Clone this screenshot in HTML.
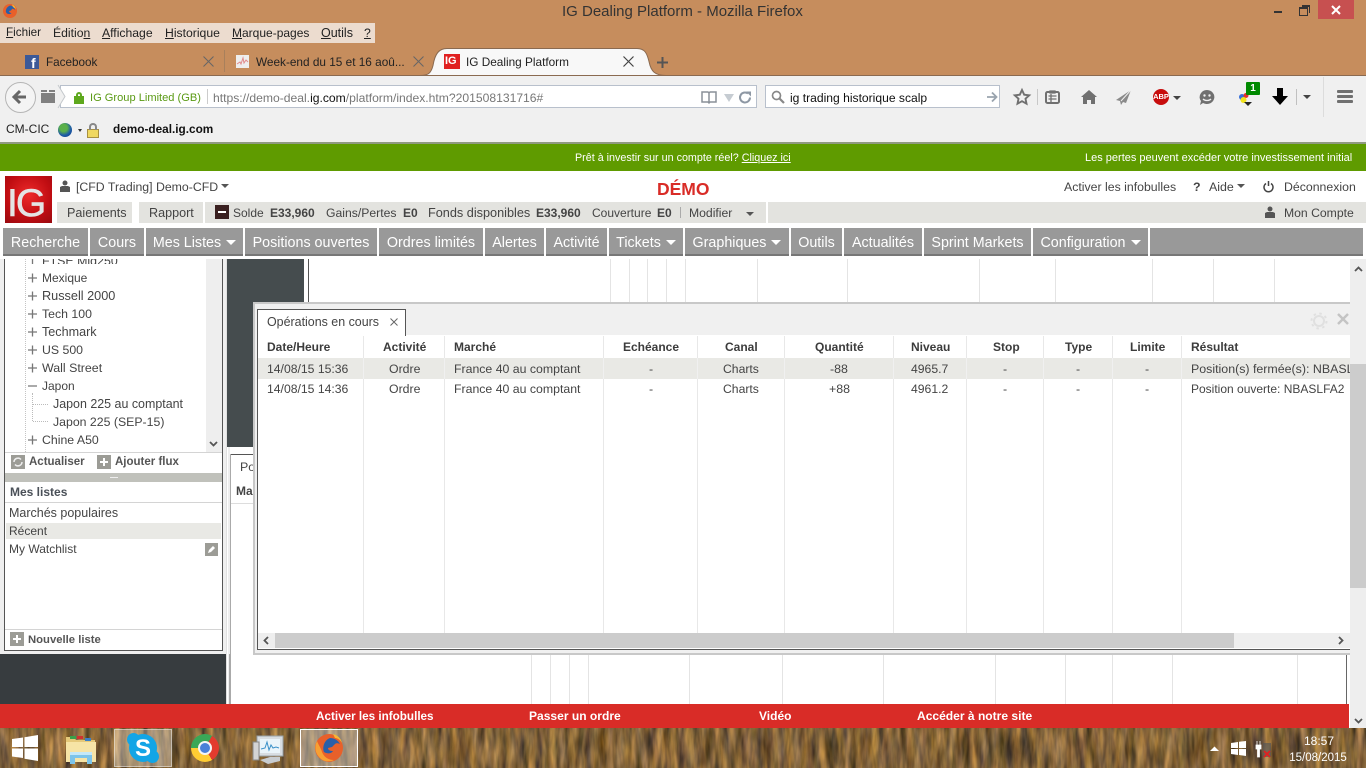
<!DOCTYPE html>
<html lang="fr">
<head>
<meta charset="utf-8">
<title>IG Dealing Platform - Mozilla Firefox</title>
<style>
html,body{margin:0;padding:0;width:1366px;height:768px;overflow:hidden;background:#fff;font-family:"Liberation Sans",Arial,sans-serif;font-size:12.4px;color:#444}
.b{position:absolute;display:block}
.t{position:absolute;white-space:nowrap;line-height:14px;display:block}
.c{text-align:center}
.h{font-weight:bold;color:#3c3c3c;font-size:12px}
.m{color:#222;font-size:12.2px}
.m u{text-decoration:underline}
.n{position:absolute;top:228px;height:26px;background:#999;border-bottom:2px solid #777;color:#fff;font-size:14.3px;line-height:31px;text-align:center;white-space:nowrap}
.n i{display:inline-block;width:0;height:0;border-left:5px solid transparent;border-right:5px solid transparent;border-top:5px solid #fff;margin-left:5px;vertical-align:2px}
.v{position:absolute;width:1px;background:#e8e8e8}
.g{position:absolute;width:1px;background:#e4e4e4}
svg{position:absolute;display:block;overflow:visible}
.arrow{position:absolute;width:0;height:0;border-left:4px solid transparent;border-right:4px solid transparent;border-top:4px solid #555}
</style>
</head>
<body>

<!-- title bar -->
<div class="b" style="left:0;top:0;width:1366px;height:75px;background:#c68d5d"></div>
<div class="b" style="left:0;top:75px;width:1366px;height:1px;background:#8a6a50"></div>
<svg style="left:2px;top:3px" width="16" height="16" viewBox="0 0 16 16"><circle cx="8" cy="8" r="7" fill="#e8602a"/><path d="M8 2.500a5.500 5.500 0 0 1 5 4.500c-1-1-2-1.500-3-1l-1 1.500-2 .5c0 1 1 2 2.500 2-1 1.500-3.500 1.500-5 0C3 8.500 4 4 8 2.500z" fill="#2a5fa8"/><path d="M10 1.500c2 .8 3.500 2.500 4 4.500l-3-2z" fill="#f7b733"/></svg>
<span class="t" style="left:562px;top:4px;font-size:15px;color:#333;line-height:16px">IG Dealing Platform - Mozilla Firefox</span>
<!-- window buttons -->
<div class="b" style="left:1274px;top:11px;width:8px;height:2px;background:#333"></div>
<div class="b" style="left:1299px;top:7px;width:7px;height:6px;border:1px solid #333;border-top-width:2px"></div>
<div class="b" style="left:1302px;top:5px;width:7px;height:6px;border:1px solid #333;border-top-width:2px;border-left:0;border-bottom:0"></div>
<div class="b" style="left:1318px;top:0;width:36px;height:19px;background:#c75050"></div>
<svg style="left:1331px;top:5px" width="10" height="10"><path d="M1 1l8 8M9 1l-8 8" stroke="#fff" stroke-width="2"/></svg>

<!-- menu -->
<div class="b" style="left:0;top:23px;width:375px;height:20px;background:#ecdccf"></div>
<span class="t m" style="left:6px;top:26px;font-size:11.700px"><u>F</u>ichier</span>
<span class="t m" style="left:53px;top:26px"><span>Éditio</span><u>n</u></span>
<span class="t m" style="left:102px;top:26px"><u>A</u>ffichage</span>
<span class="t m" style="left:165px;top:26px"><u>H</u>istorique</span>
<span class="t m" style="left:232px;top:26px;font-size:12px"><u>M</u>arque-pages</span>
<span class="t m" style="left:321px;top:26px;font-size:12.500px"><u>O</u>utils</span>
<span class="t m" style="left:364px;top:26px"><u>?</u></span>

<!-- tabs -->
<div class="b" style="left:25px;top:55px;width:14px;height:14px;background:#3b5998"></div>
<span class="t" style="left:31px;top:56px;color:#fff;font-weight:bold;font-size:14px;line-height:14px">f</span>
<span class="t m" style="left:46px;top:56px;font-size:11.700px">Facebook</span>
<svg style="left:203px;top:56px" width="11" height="11"><path d="M.5.500l10 10M10.500.500l-10 10" stroke="#666" stroke-width="1"/></svg>
<div class="b" style="left:224px;top:50px;width:1px;height:22px;background:#a8805c"></div>
<div class="b" style="left:236px;top:55px;width:13px;height:13px;background:#eee"></div>
<svg style="left:236px;top:55px" width="13" height="13"><path d="M1 9l3-2 1 2 2-6 1 5 2-3 2 2" stroke="#e08a8a" fill="none"/></svg>
<span class="t m" style="left:256px;top:55px;font-size:11.800px">Week-end du 15 et 16 aoû...</span>
<svg style="left:413px;top:56px" width="11" height="11"><path d="M.5.500l10 10M10.500.500l-10 10" stroke="#666" stroke-width="1"/></svg>
<svg style="left:420px;top:47px" width="240" height="30"><path d="M0 28.500c8 0 11-2 13-10 2-12 6-17 14-17h190c8 0 10 5 12 13 2 10 6 14 17 14z" fill="#f8f8f8" stroke="#8a6a50" stroke-width="1"/><path d="M1 29h236v2H1z" fill="#f4f4f4"/></svg>
<div class="b" style="left:444px;top:54px;width:16px;height:15px;background:#e02020"></div>
<span class="t" style="left:445px;top:55px;color:#fff;font-weight:bold;font-size:11px;line-height:13px">IG</span>
<span class="t m" style="left:466px;top:55px;font-size:11.800px">IG Dealing Platform</span>
<svg style="left:623px;top:56px" width="11" height="11"><path d="M.5.500l10 10M10.500.500l-10 10" stroke="#444" stroke-width="1.200"/></svg>
<svg style="left:656px;top:56px" width="13" height="13"><path d="M6.500 1v11M1 6.500h11" stroke="#555" stroke-width="2"/></svg>

<!-- nav toolbar -->
<div class="b" style="left:0;top:76px;width:1366px;height:66px;background:#f0f0f0"></div>
<div class="b" style="left:60px;top:85px;width:697px;height:23px;background:#fff;border:1px solid #b8c0cc;box-sizing:border-box"></div>
<div class="b" style="left:765px;top:85px;width:235px;height:23px;background:#fff;border:1px solid #b8c0cc;box-sizing:border-box"></div>
<div class="b" style="left:5px;top:82px;width:29px;height:29px;border-radius:50%;background:#f4f4f4;border:1px solid #b5b5b5;box-sizing:content-box"></div>
<svg style="left:12px;top:89px" width="16" height="16"><path d="M8 2L2 8l6 6M2 8h12" fill="none" stroke="#666" stroke-width="3"/></svg>
<div class="b" style="left:41px;top:93px;width:14px;height:10px;background:#808080"></div>
<div class="b" style="left:41px;top:90px;width:6px;height:2px;background:#808080"></div>
<div class="b" style="left:49px;top:90px;width:6px;height:2px;background:#808080"></div>
<svg style="left:58px;top:85px" width="8" height="23"><path d="M0 0l7 11.500L0 23" fill="#f0f0f0" stroke="#c4c8cc"/></svg>
<div class="b" style="left:74px;top:96px;width:10px;height:8px;background:#5ea81e"></div>
<div class="b" style="left:76px;top:92px;width:6px;height:5px;border:2px solid #5ea81e;border-bottom:0;border-radius:3px 3px 0 0;box-sizing:border-box"></div>
<span class="t" style="left:90px;top:91px;color:#5a9a14;font-size:11.100px">IG Group Limited (GB)</span>
<div class="b" style="left:207px;top:89px;width:1px;height:15px;background:#ccc"></div>
<span class="t" style="left:213px;top:91px;color:#777;font-size:12.140px">https://demo-deal.<span style="color:#111">ig.com</span>/platform/index.htm?201508131716#</span>
<svg style="left:701px;top:91px" width="16" height="13"><path d="M1 1h6l1 1 1-1h6v10H9l-1 1-1-1H1zM8 2v9" fill="none" stroke="#8a9098" stroke-width="1.500"/></svg>
<svg style="left:724px;top:94px" width="10" height="8"><path d="M0 0h10L5 8z" fill="#c6ccd2"/></svg>
<svg style="left:739px;top:91px" width="13" height="13"><path d="M11 6.500a5 5 0 1 1-2-4" fill="none" stroke="#8e98a4" stroke-width="2"/><path d="M7 .5h5v5z" fill="#8e98a4"/></svg>
<svg style="left:771px;top:90px" width="14" height="14"><circle cx="5.500" cy="5.500" r="4" fill="none" stroke="#888" stroke-width="1.700"/><path d="M8.500 8.500l4.500 4.500" stroke="#888" stroke-width="2.200"/></svg>
<span class="t" style="left:790px;top:91px;color:#111;font-size:12.100px">ig trading historique scalp</span>
<svg style="left:986px;top:91px" width="12" height="12"><path d="M6 1.500L10.500 6 6 10.500M10 6H1" fill="none" stroke="#9aa4ae" stroke-width="1.800"/></svg>
<svg style="left:1013px;top:88px" width="18" height="18" viewBox="0 0 18 18"><path d="M9 2l2.200 4.700 5 .6-3.700 3.400 1 5L9 13.200l-4.500 2.500 1-5L1.800 7.300l5-.6z" fill="none" stroke="#707070" stroke-width="1.900"/></svg>
<div class="b" style="left:1037px;top:89px;width:1px;height:16px;background:#c8c8c8"></div>
<svg style="left:1045px;top:89px" width="16" height="16"><rect x="1" y="3" width="13" height="11" rx="1.500" fill="none" stroke="#707070" stroke-width="2"/><path d="M5 2h5v2H5zM3.500 7h8M3.500 10h8M6 5v8" stroke="#707070" stroke-width="1.300" fill="none"/></svg>
<svg style="left:1081px;top:90px" width="16" height="15"><path d="M8 0L0 7h2v7h4v-4h4v4h4V7h2z" fill="#707070"/></svg>
<svg style="left:1116px;top:90px" width="16" height="15"><path d="M15 0L0 10l4 1 1 4 2-3 3 1z" fill="#8a8a8a"/><path d="M15 0L5 11" stroke="#f0f0f0"/></svg>
<div class="b" style="left:1153px;top:89px;width:16px;height:16px;border-radius:50%;background:#c70d0d"></div>
<span class="t" style="left:1153px;top:90px;width:16px;text-align:center;color:#fff;font-weight:bold;font-size:7.500px">ABP</span>
<div class="arrow" style="left:1173px;top:96px;border-top-color:#444"></div>
<svg style="left:1199px;top:89px" width="16" height="17"><path d="M8 1a7.500 7 0 1 1-4 13l-3 2 1-4A7.500 7 0 0 1 8 1z" fill="#707070"/><circle cx="5.500" cy="6.500" r="1.200" fill="#f0f0f0"/><circle cx="10.500" cy="6.500" r="1.200" fill="#f0f0f0"/><path d="M4 10c2 2 6 2 8 0" stroke="#f0f0f0" fill="none" stroke-width="1.300"/></svg>
<svg style="left:1238px;top:92px" width="14" height="12"><circle cx="4" cy="5" r="3" fill="#3a6fd8"/><circle cx="8" cy="3.500" r="2.500" fill="#e53030"/><circle cx="5.500" cy="8" r="3" fill="#f2e21b"/></svg>
<div class="b" style="left:1246px;top:82px;width:14px;height:13px;background:#008a00;border-radius:1px"></div>
<span class="t" style="left:1246px;top:82px;width:14px;text-align:center;color:#fff;font-weight:bold;font-size:10px;line-height:13px">1</span>
<div class="arrow" style="left:1244px;top:102px;border-top-color:#222"></div>
<svg style="left:1272px;top:88px" width="16" height="18"><path d="M5 0h6v8h5l-8 9-8-9h5z" fill="#000"/></svg>
<div class="b" style="left:1296px;top:89px;width:1px;height:16px;background:#c0c0c0"></div>
<div class="arrow" style="left:1303px;top:95px;border-top-color:#444"></div>
<div class="b" style="left:1323px;top:77px;width:1px;height:40px;background:#dcdcdc"></div>
<div class="b" style="left:1337px;top:90px;width:16px;height:3px;background:#707070;border-radius:1px"></div>
<div class="b" style="left:1337px;top:95px;width:16px;height:3px;background:#707070;border-radius:1px"></div>
<div class="b" style="left:1337px;top:100px;width:16px;height:3px;background:#707070;border-radius:1px"></div>

<!-- bookmarks -->
<span class="t" style="left:6px;top:122px;color:#222;font-size:12px">CM-CIC</span>
<div class="b" style="left:58px;top:123px;width:14px;height:14px;border-radius:50%;background:radial-gradient(circle at 40% 35%,#5ab04a 0 30%,#1d5aa8 60%,#0e3a78)"></div>
<div class="arrow" style="left:78px;top:129px;border-width:3px 2.500px 0;border-top-color:#333"></div>
<div class="b" style="left:87px;top:129px;width:12px;height:9px;background:#f0d860;border:1px solid #a89040;box-sizing:border-box"></div>
<div class="b" style="left:89px;top:123px;width:8px;height:7px;border:2px solid #888;border-bottom:0;border-radius:4px 4px 0 0;box-sizing:border-box"></div>
<span class="t" style="left:113px;top:122px;color:#111;font-weight:bold;font-size:11.800px">demo-deal.ig.com</span>

<!-- green bar -->
<div class="b" style="left:0;top:142px;width:1366px;height:2px;background:#8f9a80"></div>
<div class="b" style="left:0;top:144px;width:1366px;height:27px;background:#5f9b00"></div>
<span class="t" style="left:575px;top:151px;color:#fff;font-size:10.750px">Prêt à investir sur un compte réel? <u>Cliquez ici</u></span>
<span class="t" style="left:1085px;top:151px;color:#fff;font-size:11px">Les pertes peuvent excéder votre investissement initial</span>

<!-- header -->
<div class="b" style="left:5px;top:176px;width:47px;height:47px;background:radial-gradient(circle at 50% 40%,#ee2a2a,#c00d12 60%,#980a10)"></div>
<span class="t" style="left:7px;top:184px;color:#e4e4e4;font-size:39px;line-height:39px;letter-spacing:-2px;-webkit-text-stroke:.6px #e4e4e4">IG</span>
<svg style="left:60px;top:180px" width="10" height="12"><circle cx="5" cy="3" r="2.500" fill="#555"/><path d="M0 12V7l2-1h6l2 1v5z" fill="#555"/></svg>
<span class="t" style="left:76px;top:180px;font-size:12.300px">[CFD Trading] Demo-CFD</span>
<div class="arrow" style="left:221px;top:184px;border-top-color:#555"></div>
<span class="t" style="left:657px;top:180px;color:#d92c27;font-weight:bold;font-size:17.500px;line-height:18px">DÉMO</span>
<span class="t" style="left:1064px;top:180px;font-size:12.300px">Activer les infobulles</span>
<span class="t" style="left:1193px;top:180px;font-weight:bold">?</span>
<span class="t" style="left:1209px;top:180px">Aide</span>
<div class="arrow" style="left:1237px;top:184px;border-top-color:#555"></div>
<svg style="left:1263px;top:181px" width="11" height="12"><path d="M3 2.500a4.500 4.500 0 1 0 5 0M5.500 0v5" fill="none" stroke="#444" stroke-width="1.500"/></svg>
<span class="t" style="left:1284px;top:180px;font-size:12.300px">Déconnexion</span>

<div class="b" style="left:57px;top:202px;width:75px;height:21px;background:#e3e3df"></div>
<div class="b" style="left:139px;top:202px;width:64px;height:21px;background:#e3e3df"></div>
<div class="b" style="left:205px;top:202px;width:561px;height:21px;background:#e3e3df"></div>
<div class="b" style="left:768px;top:202px;width:491px;height:21px;background:#e3e3df"></div>
<div class="b" style="left:1259px;top:202px;width:107px;height:21px;background:#e3e3df"></div>
<span class="t" style="left:67px;top:206px;font-size:12.600px">Paiements</span>
<span class="t" style="left:149px;top:206px;font-size:12.600px">Rapport</span>
<div class="b" style="left:215px;top:205px;width:14px;height:14px;background:#3a2020"></div>
<div class="b" style="left:218px;top:211px;width:8px;height:2px;background:#fff"></div>
<span class="t" style="left:233px;top:206px;font-size:12px">Solde</span>
<span class="t" style="left:270px;top:206px;font-weight:bold;font-size:12px">E33,960</span>
<span class="t" style="left:326px;top:206px;font-size:12.200px">Gains/Pertes</span>
<span class="t" style="left:403px;top:206px;font-weight:bold;font-size:12px">E0</span>
<span class="t" style="left:428px;top:206px;font-size:12.700px">Fonds disponibles</span>
<span class="t" style="left:536px;top:206px;font-weight:bold;font-size:12px">E33,960</span>
<span class="t" style="left:592px;top:206px;font-size:12px">Couverture</span>
<span class="t" style="left:657px;top:206px;font-weight:bold;font-size:12px">E0</span>
<div class="b" style="left:680px;top:207px;width:1px;height:11px;background:#aaa"></div>
<span class="t" style="left:689px;top:206px;font-size:12.200px">Modifier</span>
<div class="arrow" style="left:746px;top:212px;border-top-color:#555"></div>
<svg style="left:1265px;top:206px" width="10" height="12"><circle cx="5" cy="3" r="2.500" fill="#555"/><path d="M0 12V7l2-1h6l2 1v5z" fill="#555"/></svg>
<span class="t" style="left:1284px;top:206px;font-size:12.200px">Mon Compte</span>

<!-- main nav -->
<div class="n" style="left:3px;width:85px">Recherche</div>
<div class="n" style="left:90px;width:54px">Cours</div>
<div class="n" style="left:146px;width:97px">Mes Listes<i></i></div>
<div class="n" style="left:245px;width:132px">Positions ouvertes</div>
<div class="n" style="left:379px;width:104px">Ordres limités</div>
<div class="n" style="left:485px;width:59px">Alertes</div>
<div class="n" style="left:546px;width:61px">Activité</div>
<div class="n" style="left:609px;width:74px">Tickets<i></i></div>
<div class="n" style="left:685px;width:104px">Graphiques<i></i></div>
<div class="n" style="left:791px;width:51px">Outils</div>
<div class="n" style="left:844px;width:78px">Actualités</div>
<div class="n" style="left:924px;width:107px">Sprint Markets</div>
<div class="n" style="left:1033px;width:115px">Configuration<i></i></div>
<div class="n" style="left:1150px;width:213px"></div>

<!-- left column -->
<div class="b" style="left:0;top:259px;width:226px;height:395px;background:#efefef"></div>
<div class="b" style="left:4px;top:259px;width:219px;height:392px;background:#fff;border-left:1px solid #555;border-right:1px solid #555;border-bottom:1px solid #555;box-sizing:border-box"></div>
<div class="b" style="left:206px;top:259px;width:16px;height:193px;background:#eee"></div>
<svg style="left:209px;top:441px" width="9" height="6"><path d="M1 1l3.500 3.500L8 1" fill="none" stroke="#555" stroke-width="1.800"/></svg>
<div class="b" style="left:25px;top:259px;width:0;height:193px;border-left:1px dotted #c4c4c4"></div>
<div class="b" style="left:32px;top:393px;width:0;height:28px;border-left:1px dotted #bbb"></div>
<div class="b" style="left:33px;top:404px;width:15px;height:0;border-top:1px dotted #bbb"></div>
<div class="b" style="left:33px;top:421px;width:15px;height:0;border-top:1px dotted #bbb"></div>
<div style="position:absolute;left:5px;top:259px;width:201px;height:5px;overflow:hidden"><span class="t" style="left:37px;top:-5px">FTSE Mid250</span></div>
<svg style="left:28px;top:259px" width="10" height="185"><path d="M0 19h9M4.500 14.500v9M0 37h9M4.500 32.500v9M0 55h9M4.500 50.500v9M0 73h9M4.500 68.500v9M0 91h9M4.500 86.500v9M0 109h9M4.500 104.500v9M0 127h9M0 181h9M4.500 176.500v9M4.500 0v5" stroke="#777" stroke-width="1.300" fill="none"/></svg>
<span class="t" style="left:42px;top:271px;font-size:12px">Mexique</span>
<span class="t" style="left:42px;top:289px;font-size:12.700px">Russell 2000</span>
<span class="t" style="left:42px;top:307px;font-size:12.300px">Tech 100</span>
<span class="t" style="left:42px;top:325px;font-size:12.600px">Techmark</span>
<span class="t" style="left:42px;top:343px;font-size:12.300px">US 500</span>
<span class="t" style="left:42px;top:361px">Wall Street</span>
<span class="t" style="left:42px;top:379px;font-size:12px">Japon</span>
<span class="t" style="left:53px;top:397px;font-size:12.440px">Japon 225 au comptant</span>
<span class="t" style="left:53px;top:415px;font-size:12.300px">Japon 225 (SEP-15)</span>
<span class="t" style="left:42px;top:433px;font-size:12.300px">Chine A50</span>
<div class="b" style="left:5px;top:452px;width:217px;height:1px;background:#d4d4d4"></div>
<div class="b" style="left:11px;top:455px;width:14px;height:14px;background:#9c9c96"></div>
<svg style="left:13px;top:457px" width="10" height="10"><path d="M9 5a4 4 0 0 1-7 2.500M1 5a4 4 0 0 1 7-2.500" fill="none" stroke="#eee" stroke-width="1.500"/></svg>
<span class="t" style="left:29px;top:455px;font-weight:bold;font-size:11.500px;color:#555">Actualiser</span>
<div class="b" style="left:97px;top:455px;width:14px;height:14px;background:#9c9c96"></div>
<svg style="left:99px;top:457px" width="10" height="10"><path d="M5 1v8M1 5h8" stroke="#fff" stroke-width="2"/></svg>
<span class="t" style="left:115px;top:455px;font-weight:bold;font-size:11.500px;color:#555">Ajouter flux</span>
<div class="b" style="left:5px;top:473px;width:217px;height:9px;background:#c0c1bb"></div>
<div class="b" style="left:110px;top:477px;width:8px;height:1px;background:#eee"></div>
<span class="t" style="left:10px;top:485px;font-weight:bold;font-size:12px;color:#4a5058">Mes listes</span>
<div class="b" style="left:5px;top:502px;width:217px;height:1px;background:#d4d4d4"></div>
<span class="t" style="left:9px;top:506px;font-size:12.500px">Marchés populaires</span>
<div class="b" style="left:6px;top:523px;width:215px;height:16px;background:#e9e9e5"></div>
<span class="t" style="left:9px;top:524px;font-size:12px">Récent</span>
<span class="t" style="left:9px;top:542px;font-size:12px">My Watchlist</span>
<div class="b" style="left:205px;top:543px;width:13px;height:13px;background:#9c9c96"></div>
<svg style="left:207px;top:545px" width="9" height="9"><path d="M1 8l1-3 4-4 2 2-4 4z" fill="#fff"/></svg>
<div class="b" style="left:5px;top:629px;width:217px;height:1px;background:#d4d4d4"></div>
<div class="b" style="left:10px;top:632px;width:14px;height:14px;background:#9c9c96"></div>
<svg style="left:12px;top:634px" width="10" height="10"><path d="M5 1v8M1 5h8" stroke="#fff" stroke-width="2"/></svg>
<span class="t" style="left:28px;top:633px;font-weight:bold;font-size:11.300px;color:#555">Nouvelle liste</span>
<div class="b" style="left:0;top:654px;width:226px;height:50px;background:#373c3f"></div>

<!-- centre -->
<div class="b" style="left:226px;top:259px;width:1px;height:445px;background:#e0e0e0"></div>
<div class="b" style="left:227px;top:259px;width:77px;height:188px;background:#454c4e"></div>
<div class="b" style="left:308px;top:259px;width:1px;height:188px;background:#555"></div>
<div class="b" style="left:228px;top:447px;width:2px;height:257px;background:#eee"></div>
<div class="b" style="left:229px;top:654px;width:1px;height:50px;background:#aaa"></div>
<div class="b" style="left:230px;top:454px;width:23px;height:1px;background:#555"></div>
<div class="b" style="left:230px;top:454px;width:1px;height:250px;background:#aaa"></div>
<span class="t" style="left:240px;top:460px">Po</span>
<span class="t" style="left:236px;top:484px;font-weight:bold;color:#444;font-size:12px">Ma</span>
<div class="b" style="left:231px;top:503px;width:22px;height:1px;background:#ddd"></div>

<!-- chart lines above -->
<div class="g" style="left:610px;top:259px;height:43px"></div>
<div class="g" style="left:629px;top:259px;height:43px"></div>
<div class="g" style="left:647px;top:259px;height:43px"></div>
<div class="g" style="left:666px;top:259px;height:43px"></div>
<div class="g" style="left:685px;top:259px;height:43px"></div>
<div class="g" style="left:757px;top:259px;height:43px"></div>
<div class="g" style="left:847px;top:259px;height:43px"></div>
<div class="g" style="left:979px;top:259px;height:43px"></div>
<div class="g" style="left:1055px;top:259px;height:43px"></div>
<div class="g" style="left:1152px;top:259px;height:43px"></div>
<div class="g" style="left:1213px;top:259px;height:43px"></div>
<div class="g" style="left:1274px;top:259px;height:43px"></div>
<!-- chart lines below -->
<div class="g" style="left:531px;top:655px;height:49px"></div>
<div class="g" style="left:550px;top:655px;height:49px"></div>
<div class="g" style="left:569px;top:655px;height:49px"></div>
<div class="g" style="left:588px;top:655px;height:49px"></div>
<div class="g" style="left:689px;top:655px;height:49px"></div>
<div class="g" style="left:782px;top:655px;height:49px"></div>
<div class="g" style="left:883px;top:655px;height:49px"></div>
<div class="g" style="left:995px;top:655px;height:49px"></div>
<div class="g" style="left:1065px;top:655px;height:49px"></div>
<div class="g" style="left:1112px;top:655px;height:49px"></div>
<div class="g" style="left:1172px;top:655px;height:49px"></div>
<div class="g" style="left:1297px;top:655px;height:49px"></div>
<div class="b" style="left:1346px;top:654px;width:1px;height:50px;background:#666"></div>

<!-- dialog -->
<div class="b" style="left:253px;top:302px;width:1097px;height:353px;background:#f0f0f0;border:2px solid #c8c8c8;border-right:0;box-sizing:border-box"></div>
<div class="b" style="left:257px;top:335px;width:1093px;height:315px;background:#fff;border-left:1px solid #555;border-bottom:1px solid #555;box-sizing:border-box"></div>
<div class="b" style="left:257px;top:309px;width:149px;height:27px;background:#fff;border:1px solid #555;border-bottom:0;box-sizing:border-box"></div>
<span class="t" style="left:267px;top:315px;font-size:12.450px">Opérations en cours</span>
<svg style="left:390px;top:318px" width="8" height="8"><path d="M.5.500l7 7M7.500.500l-7 7" stroke="#666"/></svg>
<svg style="left:1310px;top:312px" width="18" height="18" viewBox="0 0 18 18"><circle cx="9" cy="9" r="5" fill="none" stroke="#e0e0e0" stroke-width="2"/><circle cx="9" cy="9" r="7.500" fill="none" stroke="#e0e0e0" stroke-width="2" stroke-dasharray="2.500 3.400"/></svg>
<svg style="left:1337px;top:313px" width="12" height="12"><path d="M1 1l10 10M11 1L1 11" stroke="#c4c4c4" stroke-width="2.500"/></svg>

<div class="v" style="left:363px;top:336px;height:297px"></div>
<div class="v" style="left:444px;top:336px;height:297px"></div>
<div class="v" style="left:603px;top:336px;height:297px"></div>
<div class="v" style="left:697px;top:336px;height:297px"></div>
<div class="v" style="left:784px;top:336px;height:297px"></div>
<div class="v" style="left:893px;top:336px;height:297px"></div>
<div class="v" style="left:966px;top:336px;height:297px"></div>
<div class="v" style="left:1043px;top:336px;height:297px"></div>
<div class="v" style="left:1112px;top:336px;height:297px"></div>
<div class="v" style="left:1181px;top:336px;height:297px"></div>
<div class="b" style="left:258px;top:358px;width:1092px;height:21px;background:#e9e9e5"></div>
<div class="v" style="left:363px;top:358px;height:21px;background:#f0f0f0"></div>
<div class="v" style="left:444px;top:358px;height:21px;background:#f0f0f0"></div>
<div class="v" style="left:603px;top:358px;height:21px;background:#f0f0f0"></div>
<div class="v" style="left:697px;top:358px;height:21px;background:#f0f0f0"></div>
<div class="v" style="left:784px;top:358px;height:21px;background:#f0f0f0"></div>
<div class="v" style="left:893px;top:358px;height:21px;background:#f0f0f0"></div>
<div class="v" style="left:966px;top:358px;height:21px;background:#f0f0f0"></div>
<div class="v" style="left:1043px;top:358px;height:21px;background:#f0f0f0"></div>
<div class="v" style="left:1112px;top:358px;height:21px;background:#f0f0f0"></div>
<div class="v" style="left:1181px;top:358px;height:21px;background:#f0f0f0"></div>

<span class="t h" style="left:267px;top:340px">Date/Heure</span>
<span class="t h" style="left:383px;top:340px">Activité</span>
<span class="t h" style="left:454px;top:340px">Marché</span>
<span class="t h" style="left:623px;top:340px">Echéance</span>
<span class="t h" style="left:725px;top:340px">Canal</span>
<span class="t h" style="left:815px;top:340px">Quantité</span>
<span class="t h" style="left:911px;top:340px">Niveau</span>
<span class="t h" style="left:993px;top:340px">Stop</span>
<span class="t h" style="left:1065px;top:340px">Type</span>
<span class="t h" style="left:1130px;top:340px">Limite</span>
<span class="t h" style="left:1191px;top:340px">Résultat</span>

<span class="t" style="left:267px;top:362px;font-size:12.200px">14/08/15 15:36</span>
<span class="t" style="left:389px;top:362px;font-size:12.300px">Ordre</span>
<span class="t" style="left:454px;top:362px;font-size:12.300px">France 40 au comptant</span>
<span class="t" style="left:649px;top:362px">-</span>
<span class="t" style="left:723px;top:362px;font-size:12.200px">Charts</span>
<span class="t" style="left:830px;top:362px">-88</span>
<span class="t" style="left:911px;top:362px;font-size:12.200px">4965.7</span>
<span class="t" style="left:1003px;top:362px">-</span>
<span class="t" style="left:1076px;top:362px">-</span>
<span class="t" style="left:1145px;top:362px">-</span>
<div style="position:absolute;left:1191px;top:362px;width:159px;height:14px;overflow:hidden"><span class="t" style="left:0;top:0">Position(s) fermée(s): NBASLFA2</span></div>

<span class="t" style="left:267px;top:382px;font-size:12.200px">14/08/15 14:36</span>
<span class="t" style="left:389px;top:382px;font-size:12.300px">Ordre</span>
<span class="t" style="left:454px;top:382px;font-size:12.300px">France 40 au comptant</span>
<span class="t" style="left:649px;top:382px">-</span>
<span class="t" style="left:723px;top:382px;font-size:12.200px">Charts</span>
<span class="t" style="left:829px;top:382px">+88</span>
<span class="t" style="left:911px;top:382px;font-size:12.200px">4961.2</span>
<span class="t" style="left:1003px;top:382px">-</span>
<span class="t" style="left:1076px;top:382px">-</span>
<span class="t" style="left:1145px;top:382px">-</span>
<span class="t" style="left:1191px;top:382px;font-size:12px">Position ouverte: NBASLFA2</span>

<!-- dialog hscroll -->
<div class="b" style="left:258px;top:633px;width:1092px;height:15px;background:#eee"></div>
<div class="b" style="left:275px;top:633px;width:959px;height:15px;background:#ccc"></div>
<svg style="left:263px;top:636px" width="6" height="9"><path d="M5 1L1.500 4.500 5 8" fill="none" stroke="#555" stroke-width="1.800"/></svg>
<svg style="left:1338px;top:636px" width="6" height="9"><path d="M1 1l3.500 3.500L1 8" fill="none" stroke="#555" stroke-width="1.800"/></svg>

<!-- page scrollbar -->
<div class="b" style="left:1350px;top:259px;width:16px;height:469px;background:#eee"></div>
<div class="b" style="left:1350px;top:364px;width:16px;height:224px;background:#ccc"></div>
<svg style="left:1354px;top:266px" width="9" height="6"><path d="M1 5l3.500-3.500L8 5" fill="none" stroke="#555" stroke-width="1.800"/></svg>
<svg style="left:1354px;top:718px" width="9" height="6"><path d="M1 1l3.500 3.500L8 1" fill="none" stroke="#555" stroke-width="1.800"/></svg>

<!-- red bar -->
<div class="b" style="left:0;top:704px;width:1349px;height:24px;background:#d92c27"></div>
<span class="t" style="left:316px;top:710px;color:#fff;font-weight:bold;font-size:11.700px">Activer les infobulles</span>
<span class="t" style="left:529px;top:709px;color:#fff;font-weight:bold;font-size:12.050px">Passer un ordre</span>
<span class="t" style="left:759px;top:709px;color:#fff;font-weight:bold;font-size:12px">Vidéo</span>
<span class="t" style="left:917px;top:709px;color:#fff;font-weight:bold;font-size:12.050px">Accéder à notre site</span>

<!-- taskbar -->
<svg style="left:0;top:728px" width="1366" height="40">
<filter id="w" x="0" y="0" width="100%" height="100%" color-interpolation-filters="sRGB"><feTurbulence type="fractalNoise" baseFrequency=".14 .025" numOctaves="3" seed="7"/><feColorMatrix type="matrix" values=".7 .3 0 0 0  .55 .15 0 0 .03  .3 0 .15 0 -.005  0 0 0 0 1"/></filter>
<rect width="1366" height="40" filter="url(#w)"/>
</svg>
<svg style="left:12px;top:735px" width="26" height="26"><path d="M0 4l11-1.500V12H0zM12.500 2.300L26 0v12H12.500zM0 13.500h11V23L0 21.500zM12.500 13.500H26V26l-13.500-2.200z" fill="#fff"/></svg>
<!-- explorer -->
<svg style="left:65px;top:733px" width="32" height="32"><path d="M1 4h8l2 3h19v22H1z" fill="#e5c97a"/><path d="M1 9h30v20H1z" fill="#f6e4a6"/><rect x="5" y="3" width="6" height="3" fill="#3aa04a"/><rect x="12" y="3" width="6" height="3" fill="#d03030"/><rect x="20" y="5" width="6" height="3" fill="#3a80c8"/><path d="M5 31V21h22v10h-5v-6H10v6z" fill="#7cc4ea"/><rect x="5" y="19" width="22" height="3" fill="#c4e8f8"/></svg>
<!-- skype -->
<div class="b" style="left:114px;top:729px;width:58px;height:38px;background:rgba(255,255,255,.3);border:1px solid rgba(255,255,255,.45);box-sizing:border-box"></div>
<div class="b" style="left:129px;top:734px;width:28px;height:28px;border-radius:50%;background:#12a5e6"></div>
<div class="b" style="left:127px;top:733px;width:13px;height:13px;border-radius:50%;background:#12a5e6"></div>
<div class="b" style="left:146px;top:750px;width:13px;height:13px;border-radius:50%;background:#12a5e6"></div>
<span class="t" style="left:129px;top:735px;width:28px;text-align:center;color:#fff;font-weight:bold;font-size:24px;line-height:28px">S</span>
<!-- chrome -->
<div class="b" style="left:191px;top:734px;width:28px;height:28px;border-radius:50%;background:conic-gradient(from 30deg,#e33b2e 0 120deg,#ffcc33 120deg 240deg,#3aa757 240deg 360deg)"></div>
<div class="b" style="left:198px;top:741px;width:14px;height:14px;border-radius:50%;background:#4a80d8;border:2px solid #f4f4f4;box-sizing:border-box"></div>
<!-- task manager -->
<svg style="left:252px;top:733px" width="32" height="32"><path d="M5 3h26v20H5z" fill="#d8dde2" stroke="#9aa2a8"/><path d="M8 6h20v14H8z" fill="#eaf4fa"/><path d="M9 16l4-1 2-6 2 8 2-5 2 3 3-1 3 1" fill="none" stroke="#3a90c8"/><path d="M1 9h6v18H1z" fill="#d4d4d4" stroke="#888"/><path d="M8 27l10-3h10v4l-12 3z" fill="#c8ccd0"/></svg>
<!-- firefox -->
<div class="b" style="left:300px;top:729px;width:58px;height:38px;background:rgba(255,255,255,.35);border:1px solid #fff;box-sizing:border-box"></div>
<svg style="left:314px;top:733px" width="30" height="30" viewBox="0 0 30 30"><circle cx="15" cy="15" r="14" fill="#e8602a"/><path d="M16 5c4 0 8 2 10 6-2-1-4-1-5 0l-3 3-4 1c0 2 2 3 5 3-2 3-6 3-9 1-2-4 0-12 6-14z" fill="#2a5fa8"/><path d="M19 1c4 1 8 4 9 9-1-2-4-5-7-5z" fill="#f7b733"/><path d="M3 8c-3 6-2 13 4 18 4 3 9 3 13 1-6 0-10-3-12-8-1-4-3-6-5-11z" fill="#f7a033"/></svg>
<!-- tray -->
<svg style="left:1210px;top:746px" width="9" height="6"><path d="M0 5l4.500-4.500L9 5z" fill="#fff"/></svg>
<svg style="left:1231px;top:741px" width="15" height="15"><path d="M0 2l7-1v6H0zM8 .8L15 0v7H8zM0 8h7v6l-7-1zM8 8h7v7l-7-1z" fill="#fff"/></svg>
<svg style="left:1255px;top:740px" width="18" height="18"><path d="M2 1v4M5 1v4M1 5h5v4H4.500v8h-2V9H1z" fill="#fff" stroke="#fff" stroke-width=".8"/><rect x="8" y="3" width="8" height="14" fill="#555" opacity=".7"/><path d="M9 11l6 6M15 11l-6 6" stroke="#e02020" stroke-width="1.800"/></svg>
<span class="t c" style="left:1290px;top:734px;width:58px;color:#fff;font-size:12px">18:57</span>
<span class="t c" style="left:1287px;top:751px;width:62px;color:#fff;font-size:11.500px">15/08/2015</span>

</body>
</html>
